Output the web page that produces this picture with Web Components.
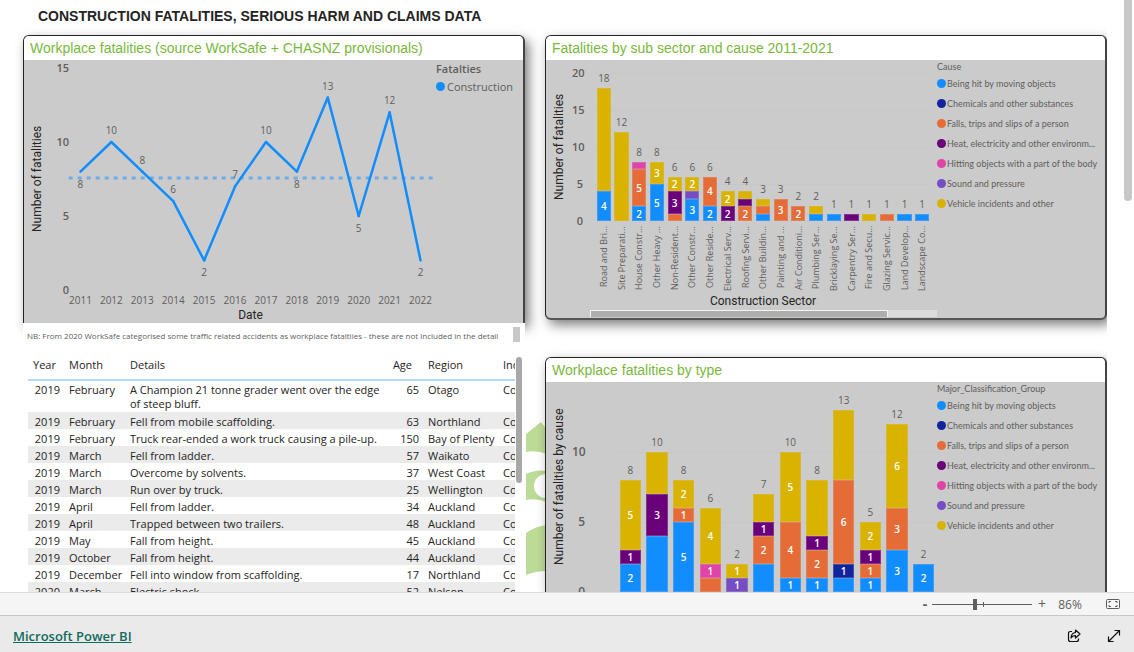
<!DOCTYPE html>
<html lang="en">
<head>
<meta charset="utf-8">
<title>Construction fatalities, serious harm and claims data</title>
<style>
html, body { margin: 0; height: 100%; }
body { font-family: "Open Sans", "Noto Sans", sans-serif; font-size: 12px; color: #252423; background: #fff; }
</style>
</head>
<body>
<report-app></report-app>
<script>
const C = { b: '#118dff', n: '#12239e', o: '#e66c37', p: '#6b007b', k: '#e044a7', s: '#744ec2', y: '#d9b300' };
const CAUSES = [
  ['b', 'Being hit by moving objects'], ['n', 'Chemicals and other substances'],
  ['o', 'Falls, trips and slips of a person'], ['p', 'Heat, electricity and other environm...'],
  ['k', 'Hitting objects with a part of the body'], ['s', 'Sound and pressure'], ['y', 'Vehicle incidents and other']
];

class Base extends HTMLElement {
  connectedCallback() {
    if (!this.shadowRoot) this.attachShadow({ mode: 'open' }).innerHTML = this.render();
  }
}

customElements.define('visual-card', class extends Base {
  render() {
    return `<style>
      :host { display: flex; flex-direction: column; box-sizing: border-box; border: 1px solid #252423; border-width: 1px 2px 2px 1px; border-right-color: #444; border-bottom-color: #555; border-radius: 6px;
        background: #cbcbcb; box-shadow: 4px 5px 12px rgba(0,0,0,.5); overflow: hidden; }
      :host([open]) { border-bottom: 0; border-radius: 6px 6px 0 0; }
      h2 { margin: 0; padding: 0 6px; background: #fff; color: #7ab83c; font: 14px/24px "Liberation Sans", Arial, sans-serif; white-space: nowrap; }
    </style><h2>${this.getAttribute('heading')}</h2><slot></slot>`;
  }
});

customElements.define('chart-legend', class extends Base {
  render() {
    const one = this.hasAttribute('single');
    const items = one ? [['b', 'Construction']] : CAUSES;
    return `<style>
      :host { display: block; color: #605e5c; font-family: Lato, sans-serif; font-size: 9px; line-height: 13px; white-space: nowrap; }
      :host([single]) { font-family: "Open Sans", sans-serif; font-size: 11px; line-height: 17px; }
      :host([single]) b { font-weight: 600; }
      b { font-weight: 400; display: block; }
      ul { list-style: none; margin: 0; padding: 0; display: grid; grid-auto-rows: 20px; align-items: center; }
      :host([single]) ul { grid-auto-rows: 18px; }
      li { display: flex; align-items: center; gap: 1px; }
      i { width: 9px; height: 9px; border-radius: 50%; flex: none; }
      :host([single]) li { gap: 2px; }
    </style><b>${this.getAttribute('heading')}</b><ul>${items.map(([c, t]) => `<li><i style="background:${C[c]}"></i><span>${t}</span></li>`).join('')}</ul>`;
  }
});

const YEARS = [8, 10, 8, 6, 2, 7, 10, 8, 13, 5, 12, 2];
const BELOW = [0, 4, 7, 9, 11];
customElements.define('line-chart', class extends Base {
  render() {
    const x = i => ((i + .5) / 12 * 100).toFixed(3) + '%';
    const y = v => 230 - v * 14.8;
    let s = '';
    for (const v of [0, 5, 10, 15]) s += `<line class="g" x1="1%" x2="99%" y1="${y(v)}" y2="${y(v)}"/>`;
    s += `<line class="avg" x1="1%" x2="99.4%" y1="118" y2="118"/>`;
    for (let i = 1; i < 12; i++) s += `<line class="l" x1="${x(i - 1)}" y1="${y(YEARS[i - 1])}" x2="${x(i)}" y2="${y(YEARS[i])}"/>`;
    YEARS.forEach((v, i) => { s += `<text x="${x(i)}" y="${y(v) + (BELOW.includes(i) ? 16 : -8)}">${v}</text><text x="${x(i)}" y="244">${2011 + i}</text>`; });
    return `<style>
      :host { display: grid; grid-template-columns: 26px 15px minmax(0,1fr) 87px; height: 263px; overflow: hidden; color: #605e5c; }
      .t { writing-mode: vertical-rl; transform: rotate(180deg); color: #252423; font: 12px/26px Roboto, sans-serif; text-align: center; height: 238px; }
      .ax { display: flex; flex-direction: column; justify-content: space-between; height: 238px; text-align: right; font-size: 11px; line-height: 16px; font-weight: 600; margin-right: -4px; }
      svg { width: 100%; height: 248px; display: block; }
      .p { display: flex; flex-direction: column; min-width: 0; }
      .d { color: #252423; font: 12px/15px Roboto, sans-serif; text-align: center; }
      text { font-size: 10px; text-anchor: middle; fill: #605e5c; }
      .l { stroke: #118dff; stroke-width: 2.5; stroke-linecap: round; }
      .g { stroke: #c3c3c3; stroke-dasharray: 1 5; }
      .avg { stroke: #118dff; stroke-opacity: .5; stroke-width: 3; stroke-dasharray: 4 5; }
    </style>
    <div class="t">Number of fatalities</div>
    <div class="ax"><span>15</span><span>10</span><span>5</span><span>0</span></div>
    <div class="p"><svg role="img" aria-label="Fatalities by year">${s}</svg><div class="d">Date</div></div>
    <chart-legend single heading="Fatalties"></chart-legend>`;
  }
});

/* Each bar is a list of cause key, count and "*" when the count is printed. */
const SECTORS = [
  ['Road and Bri...', 'b4* y14'], ['Site Preparati...', 'y12'], ['House Constr...', 'b2* o5* k1'], ['Other Heavy ...', 'b5* y3*'],
  ['Non-Resident...', 'o1 p3* y2*'], ['Other Constr...', 'b3* s1 y2*'], ['Other Reside...', 'b2* o4*'], ['Electrical Serv...', 'p2* y2*'],
  ['Roofing Servi...', 'o2* p1 y1'], ['Other Buildin...', 'b1 o1 y1'], ['Painting and ...', 'o3*'], ['Air Conditioni...', 'o2*'],
  ['Plumbing Ser...', 'b1 y1'], ['Bricklaying Se...', 'b1'], ['Carpentry Ser...', 'p1'], ['Fire and Secu...', 'y1'],
  ['Glazing Servic...', 'o1'], ['Land Develop...', 'b1'], ['Landscape Co...', 'b1']
];
const TYPES = ['b2* p1* y5*', 'b4 p3* y3', 'b5* o1* y2*', 'o1 k1* y4*', 's1* y1*', 'b2 o2* p1* y2', 'b1* o4* y5*',
  'b1* o2* p1* y4', 'b1 n1* o6* y5', 'b1* o1* p1* y2*', 'b3* o3* y6*', 'b2*'].map(s => ['', s]);

customElements.define('bar-chart', class extends Base {
  render() {
    const sector = this.getAttribute('data') === 'sector';
    const max = sector ? 20 : 15, data = sector ? SECTORS : TYPES;
    const ticks = sector ? [20, 15, 10, 5, 0] : [10, 5, 0];
    const bars = data.map(([, s]) => {
      const segs = s.split(' ').map(k => [k[0], parseInt(k.slice(1)), k.endsWith('*')]);
      const total = segs.reduce((a, g) => a + g[1], 0);
      return `<div class="bar"><span class="tot">${total}</span>${segs.reverse().map(([c, n, l]) =>
        `<div class="seg" style="height:${n / max * 100}%;background-color:${C[c]}">${l ? n : ''}</div>`).join('')}</div>`;
    }).join('');
    return `<style>
      :host { display: grid; grid-template-columns: 26px 11px 12px minmax(0,1fr) 174px; color: #605e5c; --h: 148px; padding-top: 13px; }
      :host([data=type]) { grid-template-columns: 26px 13px 32px minmax(0,1fr) 168px; --h: 210px; padding-top: 0; }
      .t { writing-mode: vertical-rl; transform: rotate(180deg); color: #252423; font: 12px/26px Roboto, sans-serif; text-align: center; height: var(--h); white-space: nowrap; }
      .ax { display: flex; flex-direction: column; justify-content: space-between; box-sizing: border-box; height: calc(var(--h) + 16px); margin: -8px 0; text-align: right; font-size: 11px; line-height: 16px; font-weight: 600; }
      :host([data=type]) .ax { font-size: 12px; padding-top: 70px; }
      .plot { height: var(--h); display: flex; background: repeating-linear-gradient(#c7c7c7 0 1px, transparent 1px var(--s)); }
      .bar { flex: 1 1 0; min-width: 0; display: flex; flex-direction: column; justify-content: flex-end; align-items: center; height: 100%; }
      .tot { font-size: 10px; line-height: 14px; padding-bottom: 3px; }
      .seg { flex: none; width: 80%; box-sizing: border-box; display: flex; align-items: center; justify-content: center; color: #fff; font-size: 10px; line-height: 10px; font-weight: 600; border: 1px solid rgba(203,203,203,.25); }
      .x { display: flex; height: 67px; padding-top: 5px; }
      .x span { flex: 1 1 0; min-width: 0; writing-mode: vertical-rl; transform: rotate(180deg); display: flex; align-items: center; justify-content: flex-end; font-size: 9px; line-height: 14px; white-space: nowrap; }
      .d { color: #252423; font: 12px/16px Roboto, sans-serif; text-align: center; }
      .bar-s { height: 7px; margin: 1px -6px 0 -5px; background: #dcdcdc; }
      .bar-s i { display: block; box-sizing: border-box; width: 86%; height: 7px; background: #aeaeae; border: solid #f4f4f4; border-width: 1px 1px 0; }
      :host([data=sector]) chart-legend { padding-left: 6px; margin-top: -13px; }
    </style>
    <div class="t">${sector ? 'Number of fatalities' : 'Number of fatalities by cause'}</div>
    <div class="ax">${ticks.map(t => `<span>${t}</span>`).join('')}</div><div></div>
    <div><div class="plot" style="--s:${sector ? 37 : 70}px">${bars}</div>
    ${sector ? `<div class="x">${data.map(d => `<span>${d[0]}</span>`).join('')}</div><div class="d">Construction Sector</div><div class="bar-s"><i></i></div>` : ''}</div>
    <chart-legend heading="${sector ? 'Cause' : 'Major_Classification_Group'}"></chart-legend>`;
  }
});

const ROWS = [
  [2019, 'February', 'A Champion 21 tonne grader went over the edge of steep bluff.', 65, 'Otago'],
  [2019, 'February', 'Fell from mobile scaffolding.', 63, 'Northland'],
  [2019, 'February', 'Truck rear-ended a work truck causing a pile-up.', 150, 'Bay of Plenty'],
  [2019, 'March', 'Fell from ladder.', 57, 'Waikato'],
  [2019, 'March', 'Overcome by solvents.', 37, 'West Coast'],
  [2019, 'March', 'Run over by truck.', 25, 'Wellington'],
  [2019, 'April', 'Fell from ladder.', 34, 'Auckland'],
  [2019, 'April', 'Trapped between two trailers.', 48, 'Auckland'],
  [2019, 'May', 'Fall from height.', 45, 'Auckland'],
  [2019, 'October', 'Fall from height.', 44, 'Auckland'],
  [2019, 'December', 'Fell into window from scaffolding.', 17, 'Northland'],
  [2020, 'March', 'Electric shock.', 52, 'Nelson']
];
customElements.define('incident-table', class extends Base {
  render() {
    return `<style>
      :host { display: flex; gap: 1px; align-items: flex-start; padding: 8px 3px 0 5px; background: #fff; }
      .w { flex: 1; min-width: 0; overflow: hidden; }
      table { width: 100%; table-layout: fixed; border-collapse: collapse; }
      th { font-weight: 400; text-align: left; vertical-align: top; height: 22px; padding: 0 0 0 5px; border-bottom: 2px solid #b3d9ff; }
      th, td { font-size: 11px; line-height: 15px; white-space: nowrap; overflow: hidden; }
      td { padding: 2px 0 0 5px; vertical-align: top; }
      td:nth-child(3) { white-space: normal; }
      tr:first-child td { line-height: 14px; padding-bottom: 1px; }
      td:first-child, td:nth-child(4) { text-align: right; padding-right: 4px; }
      th:nth-child(4) { text-align: right; padding-right: 11px; }
      tbody tr:nth-child(even) { background: #ebebeb; }
      .s { width: 6px; height: 126px; border-radius: 3px; background: #a8a8a8; flex: none; }
    </style><div class="w"><table>
      <colgroup><col style="width:36px"><col style="width:61px"><col><col style="width:38px"><col style="width:75px"><col style="width:17px"></colgroup>
      <thead><tr><th>Year</th><th>Month</th><th>Details</th><th>Age</th><th>Region</th><th>Ind</th></tr></thead>
      <tbody>${ROWS.map(r => `<tr>${r.map(c => `<td>${c}</td>`).join('')}<td>Co</td></tr>`).join('')}</tbody></table></div><div class="s"></div>`;
  }
});

customElements.define('zoom-bar', class extends Base {
  render() {
    return `<style>
      :host { display: flex; align-items: center; justify-content: flex-end; height: 22px; padding-right: 14px; background: #f5f5f5; border-top: 1px solid #dcdcdc; color: #605e5c; }
      button { border: 0; background: none; padding: 0; width: 14px; color: inherit; font: 14px/20px "Open Sans", sans-serif; }
      .minus { width: 8px; font-weight: 700; }
      input { appearance: none; width: 100px; height: 20px; margin: 0 3px; background: linear-gradient(#605e5c, #605e5c) 51px 8px / 1px 5px no-repeat, linear-gradient(#605e5c, #605e5c) 0 10px / 100% 1px no-repeat; }
      input::-webkit-slider-thumb { appearance: none; width: 4px; height: 11px; background: #605e5c; }
      output { width: 32px; margin: 0 20px 0 5px; text-align: center; }
      .fit { height: 12px; display: flex; }
    </style><button class="minus" aria-label="Zoom out">-</button><input type="range" aria-label="Zoom" min="0" max="100" value="43"><button aria-label="Zoom in">+</button><output>86%</output>
    <button class="fit" aria-label="Fit to page"><svg width="14" height="12" fill="none" stroke="#605e5c"><rect x=".5" y="1.5" width="13" height="9" rx="1"/><path d="M3 5V3.5h2M9 3.5h2V5M3 7V8.500h2M9 8.500h2V7"/></svg></button>`;
  }
});

customElements.define('embed-footer', class extends Base {
  render() {
    return `<style>
      :host { display: flex; align-items: center; justify-content: space-between; height: 37px; padding: 3px 13px 0; background: #eaeaea; border-top: 1px solid #c8c8c8; box-sizing: border-box; }
      a { color: #0f6b5c; font-size: 13px; line-height: 20px; font-weight: 600; text-decoration: underline; }
      div { display: flex; gap: 26px; }
      button { border: 0; background: none; padding: 0; width: 14px; height: 14px; display: flex; }
    </style><a href="#powerbi">Microsoft Power BI</a><div>
    <button aria-label="Share"><svg width="14" height="14" fill="none" stroke="#111" stroke-width="1.2" stroke-linejoin="round"><path d="M5 2.500H3.500Q1.500 2.500 1.500 4.500V10.500Q1.500 12.500 3.500 12.500H9.500Q11.500 12.500 11.500 10.500V9.500"/><path d="M8.500 1L13 5L8.500 9V6.700Q5.500 6.500 4 9Q4.300 4 8.500 3.500Z"/></svg></button>
    <button aria-label="Full screen"><svg width="14" height="14" fill="none" stroke="#111" stroke-width="1.2"><path d="M1.500 12.500L12.500 1.500M7.500 1.500H12.500V6.500M1.500 7.500V12.500H6.500"/></svg></button></div>`;
  }
});

customElements.define('report-app', class extends Base {
  render() {
    return `<style>
      :host { display: flex; flex-direction: column; height: 100vh; }
      main { flex: 1; min-height: 0; overflow: hidden; position: relative; display: flex; flex-direction: column; }
      h1 { margin: 0; padding: 8px 38px 3px; font: bold 14px/16px "Liberation Sans", Arial, sans-serif; flex: none; }
      .grid { display: grid; grid-template-columns: minmax(0,502fr) minmax(0,562fr); column-gap: 20px; padding: 8px 27px 0 23px; }
      .col { display: flex; flex-direction: column; position: relative; min-width: 0; }
      .right { gap: 37px; }
      .right visual-card { clip-path: inset(-20px 0 -20px -20px); }
      .sector { height: 285px; }
      .low { position: relative; background: #fff; }
      .note { display: flex; justify-content: space-between; padding: 4px 5px 0 4px; height: 26px; box-sizing: border-box; font-size: 8px; line-height: 18px; color: #605e5c; white-space: nowrap; }
      .note i { width: 7px; height: 15px; background: #c8c8c8; }
      .logo { position: absolute; left: calc(100% + 1px); top: 387px; width: 21px; height: 153px; }
      .thumb { position: absolute; right: 2px; top: -6px; width: 8px; height: 207px; border-radius: 4px; background: #c8c8c8; }
    </style>
    <main><h1>CONSTRUCTION FATALITIES, SERIOUS HARM AND CLAIMS DATA</h1>
      <div class="grid">
        <div class="col">
          <visual-card open heading="Workplace fatalities (source WorkSafe + CHASNZ provisionals)"><line-chart></line-chart></visual-card>
          <div class="low"><div class="note"><span>NB: From 2020 WorkSafe categorised some traffic related accidents as workplace fataltiies - these are not included in the detail</span><i></i></div>
          <incident-table></incident-table></div>
          <svg class="logo" fill="#bcdb96"><path d="M0 12L15 0L21 8V32Q10 28 0 30ZM0 52Q10 47 21 49V80Q10 76 0 78ZM0 111Q10 104 21 103V149Q10 149 0 153Z"/><circle cx="20" cy="64" r="12" fill="#fff"/></svg>
        </div>
        <div class="col right">
          <visual-card class="sector" heading="Fatalities by sub sector and cause 2011-2021"><bar-chart data="sector"></bar-chart></visual-card>
          <visual-card open heading="Workplace fatalities by type"><bar-chart data="type"></bar-chart></visual-card>
        </div>
      </div><div class="thumb"></div>
    </main><zoom-bar></zoom-bar><embed-footer></embed-footer>`;
  }
});
</script>
</body>
</html>
